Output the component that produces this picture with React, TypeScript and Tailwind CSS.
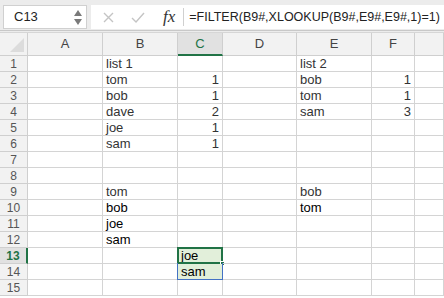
import React from 'react';

const cols = ['A', 'B', 'C', 'D', 'E', 'F', ''];

type Cell = { v: string; num?: boolean; dark?: boolean };

// row -> column index (0 = A) -> value
const data: Record<number, Record<number, Cell>> = {
  1: { 1: { v: 'list 1' }, 4: { v: 'list 2' } },
  2: { 1: { v: 'tom' }, 2: { v: '1', num: true }, 4: { v: 'bob' }, 5: { v: '1', num: true } },
  3: { 1: { v: 'bob' }, 2: { v: '1', num: true }, 4: { v: 'tom' }, 5: { v: '1', num: true } },
  4: { 1: { v: 'dave' }, 2: { v: '2', num: true }, 4: { v: 'sam' }, 5: { v: '3', num: true } },
  5: { 1: { v: 'joe' }, 2: { v: '1', num: true } },
  6: { 1: { v: 'sam' }, 2: { v: '1', num: true } },
  9: { 1: { v: 'tom' }, 4: { v: 'bob' } },
  10: { 1: { v: 'bob', dark: true }, 4: { v: 'tom', dark: true } },
  11: { 1: { v: 'joe', dark: true } },
  12: { 1: { v: 'sam', dark: true } },
  13: { 2: { v: 'joe', dark: true } },
  14: { 2: { v: 'sam', dark: true } },
};

const rows = Array.from({ length: 15 }, (_, i) => i + 1);

const FormulaBar = () => (
  <div className="flex h-[31px] items-stretch border-b border-[#c8c8c8] bg-[#ececec] pt-[5px] pb-[1px]">
    <div className="ml-[3px] flex w-[84px] items-center justify-between border border-[#d0d0d0] bg-white pl-[10px] pr-[4px]">
      <span className="text-[13px] text-[#222]">C13</span>
      <div className="flex flex-col items-center gap-[3px]">
        <svg width="8" height="6" viewBox="0 0 8 6"><path d="M4 0 L8 6 L0 6 Z" fill="#7a7a7a" /></svg>
        <svg width="8" height="6" viewBox="0 0 8 6"><path d="M0 0 L8 0 L4 6 Z" fill="#7a7a7a" /></svg>
      </div>
    </div>
    <div className="ml-[4px] flex flex-1 items-center bg-white">
      <svg className="ml-[12px]" width="11" height="11" viewBox="0 0 11 11">
        <path d="M1 1 L10 10 M10 1 L1 10" stroke="#c4c4c4" strokeWidth="1.4" />
      </svg>
      <svg className="ml-[17px]" width="14" height="11" viewBox="0 0 14 11">
        <path d="M1 6 L5 10 L13 1" stroke="#c4c4c4" strokeWidth="1.4" fill="none" />
      </svg>
      <span className="ml-[18px] font-['Liberation_Serif',serif] text-[17px] italic text-[#333]">fx</span>
      <div className="ml-[8px] h-[18px] w-px bg-[#d0d0d0]" />
      <span className="ml-[5px] text-[12.5px] text-[#222]">=FILTER(B9#,XLOOKUP(B9#,E9#,E9#,1)=1)</span>
    </div>
  </div>
);

export default function App() {
  return (
    <div className="h-[298px] w-[444px] overflow-hidden bg-white font-['Liberation_Sans',Arial,sans-serif]">
      <FormulaBar />
      <div className="h-[2px] border-b border-[#d6d6d6] bg-[#ececec]" />
      <div className="grid grid-cols-[28px_75px_75px_45px_74px_75px_43px_1fr] grid-rows-[23px_repeat(15,16px)]">
        {/* header row */}
        <div className="relative border-r border-b border-[#cfcfcf] bg-[#f2f2f2]">
          <svg className="absolute right-[3px] bottom-[3px]" width="14" height="14" viewBox="0 0 14 14">
            <path d="M14 0 L14 14 L0 14 Z" fill="#dcdcdc" />
          </svg>
        </div>
        {cols.map((c, i) => (
          <div
            key={c + i}
            className={
              i === 2
                ? 'flex items-center justify-center border-r border-b-2 border-r-[#cfcfcf] border-b-[#217346] bg-[#e1e1e1] text-[13px] text-[#217346]'
                : 'flex items-center justify-center border-r border-b border-[#cfcfcf] bg-[#f2f2f2] text-[13px] text-[#444]'
            }
          >
            {c}
          </div>
        ))}

        {rows.map((r) => (
          <React.Fragment key={r}>
            <div
              className={
                r === 13
                  ? 'flex items-center justify-center border-r-2 border-b border-r-[#217346] border-b-[#cfcfcf] bg-[#e1e1e1] text-[12px] font-bold text-[#217346]'
                  : 'flex items-center justify-center border-r border-b border-[#cfcfcf] bg-[#f2f2f2] text-[12px] text-[#555]'
              }
            >
              {r}
            </div>
            {cols.map((_, ci) => {
              const cell = data[r]?.[ci];
              const spill = ci === 2 && (r === 13 || r === 14);
              return (
                <div
                  key={ci}
                  className={
                    (spill ? 'bg-[#e2efda] ' : '') +
                    'relative flex items-center overflow-visible border-r border-b border-[#d4d4d4] px-[3px] text-[13px] leading-none ' +
                    (cell?.num ? 'justify-end ' : '') +
                    (cell?.dark ? 'text-black' : 'text-[#333]')
                  }
                >
                  {cell?.v}
                  {ci === 2 && r === 13 && (
                    <>
                      <div className="pointer-events-none absolute -top-[1px] -left-[1px] -right-[1px] -bottom-[1px] border-2 border-[#217346]" />
                      <div className="absolute -right-[3px] -bottom-[3px] h-[5px] w-[5px] border border-white bg-[#217346]" />
                    </>
                  )}
                  {ci === 2 && r === 14 && (
                    <div className="pointer-events-none absolute -top-[1px] -left-[1px] right-[-1px] bottom-[-1px] border border-t-0 border-[#4472c4]" />
                  )}
                </div>
              );
            })}
          </React.Fragment>
        ))}
      </div>
    </div>
  );
}
